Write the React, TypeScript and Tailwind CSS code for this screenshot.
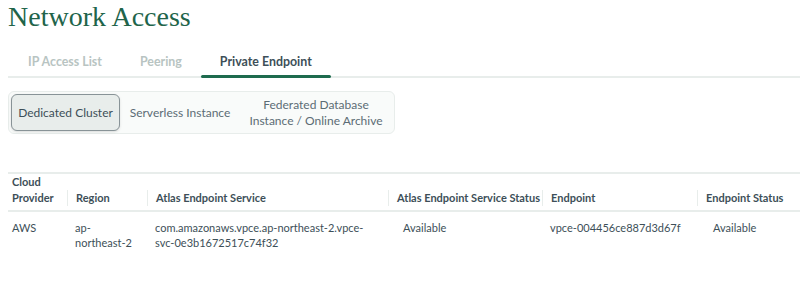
import React, { useState } from "react";

const tabs = ["IP Access List", "Peering", "Private Endpoint"];

const App = () => {
  const [activeTab, setActiveTab] = useState("Private Endpoint");
  const [segment, setSegment] = useState("dedicated");

  const segClass = (key: string) =>
    segment === key
      ? "bg-[#e8edeb] border border-[#889397] text-[#3d4f58] shadow-sm"
      : "border border-transparent text-[#5c6c75]";

  return (
    <div
      className="w-[800px] h-[292px] bg-white overflow-hidden text-[#3d4f58]"
      style={{ fontFamily: "Lato, 'Noto Sans', sans-serif" }}
    >
      <div className="pl-[8px]">
        <h1
          className="text-[28px] leading-[32px] pt-px text-[#21644a]"
          style={{ fontFamily: "'Liberation Serif', serif" }}
        >
          Network Access
        </h1>

        <div className="mt-[15px] flex border-b-[2px] border-[#e8edeb]">
          {tabs.map((t) => (
            <button
              key={t}
              onClick={() => setActiveTab(t)}
              className={`relative px-[19px] first:ml-px h-[28px] text-[12.4px] font-bold ${
                activeTab === t ? "text-[#3d4f58]" : "text-[#b8c4c2]"
              }`}
            >
              {t}
              {activeTab === t && (
                <span className="absolute left-0 right-0 bottom-[-2px] h-[3px] bg-[#1e6b4e] rounded-full" />
              )}
            </button>
          ))}
        </div>

        <div className="mt-[13px] inline-flex items-center p-[2px] h-[43px] bg-[#f9fbfa] border border-[#e8edeb] rounded-md">
          <button
            onClick={() => setSegment("dedicated")}
            className={`h-[37px] w-[109px] text-[12px] rounded-md ${segClass("dedicated")}`}
          >
            Dedicated Cluster
          </button>
          <button
            onClick={() => setSegment("serverless")}
            className={`h-[37px] w-[120px] text-[12px] rounded-md ${segClass("serverless")}`}
          >
            Serverless Instance
          </button>
          <button
            onClick={() => setSegment("federated")}
            className={`h-[37px] w-[152px] text-[12px] leading-[16px] text-center rounded-md ${segClass("federated")}`}
          >
            Federated Database
            <br />
            Instance / Online Archive
          </button>
        </div>

        <div className="mt-[38px] border-t-[2px] border-[#e8edeb]">
          <div className="grid grid-cols-[59px_80px_241px_154px_155px_1fr] border-b-[2px] border-[#e8edeb] text-[11px] font-bold leading-[16px] h-[38px] items-end pb-[4px] text-[#3d4f58] whitespace-nowrap">
            <div className="pl-[4px]">
              Cloud
              <br />
              Provider
            </div>
            <div className="border-l border-[#e8edeb] pl-[8px]">Region</div>
            <div className="border-l border-[#e8edeb] pl-[8px]">Atlas Endpoint Service</div>
            <div className="border-l border-[#e8edeb] pl-[8px]">Atlas Endpoint Service Status</div>
            <div className="border-l border-[#e8edeb] pl-[8px]">Endpoint</div>
            <div className="border-l border-[#e8edeb] pl-[8px]">Endpoint Status</div>
          </div>
          <div className="grid grid-cols-[59px_80px_241px_154px_155px_1fr] text-[11px] leading-[15px] pt-[8px] text-[#3d4f58]">
            <div className="pl-[4px]">AWS</div>
            <div className="pl-[8px]">
              ap-
              <br />
              northeast-2
            </div>
            <div className="pl-[8px]">
              com.amazonaws.vpce.ap-northeast-2.vpce-
              <br />
              svc-0e3b1672517c74f32
            </div>
            <div className="pl-[15px]">Available</div>
            <div className="pl-[8px]">vpce-004456ce887d3d67f</div>
            <div className="pl-[16px]">Available</div>
          </div>
        </div>
      </div>
    </div>
  );
};

export default App;
